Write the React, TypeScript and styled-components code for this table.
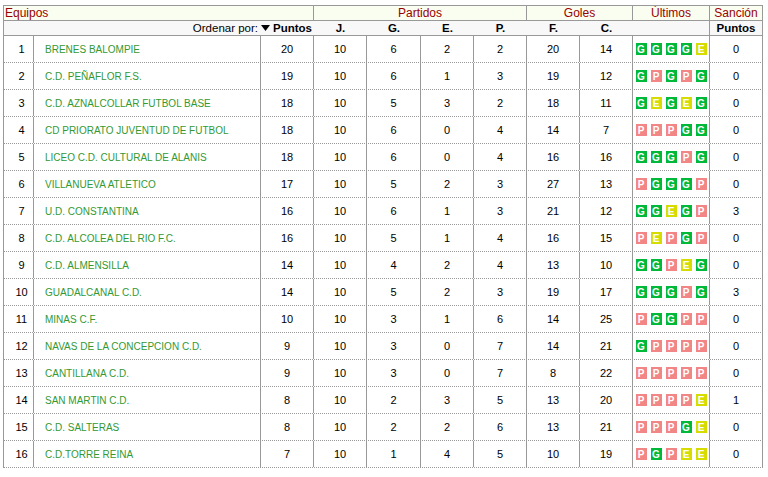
import React from "react";
import styled, { createGlobalStyle } from "styled-components";

const GlobalStyle = createGlobalStyle`
  html, body { margin: 0; padding: 0; background: #ffffff; }
  body { font-family: "Liberation Sans", Arial, sans-serif; }
`;

const COLS = "30px 227px 53px 53px 54px 53px 53px 53px 53px 77px 53px";
const LINE = "#999999";

const Table = styled.div`
  margin: 5px 0 0 3px;
  width: 760px;
  box-sizing: border-box;
  border-top: 1px solid ${LINE};
  border-left: 1px solid ${LINE};
  font-family: "Liberation Sans", Arial, sans-serif;
`;

const Row = styled.div<{ $kind: "group" | "sub" | "data" }>`
  display: grid;
  grid-template-columns: ${COLS};
  box-sizing: border-box;
  height: ${(p) => (p.$kind === "data" ? 27 : 15)}px;
  background: ${(p) =>
    p.$kind === "group" ? "#f9fef0" : p.$kind === "sub" ? "#f8f8f8" : "#ffffff"};
  border-bottom: 1px ${(p) => (p.$kind === "data" ? "dotted" : "solid")} ${LINE};
`;

const Cell = styled.div<{
  $span?: number;
  $align?: "left" | "center" | "right";
  $line?: boolean;
}>`
  grid-column: span ${(p) => p.$span ?? 1};
  box-sizing: border-box;
  display: flex;
  align-items: center;
  justify-content: ${(p) =>
    p.$align === "left" ? "flex-start" : p.$align === "right" ? "flex-end" : "center"};
  border-right: ${(p) => (p.$line === false ? "none" : `1px solid ${LINE}`)};
  white-space: nowrap;
  overflow: hidden;
`;

const GroupCell = styled(Cell)`
  color: #990000;
  font-size: 12px;
  padding-left: ${(p) => (p.$align === "left" ? "1px" : "0")};
`;

const SubCell = styled(Cell)`
  color: #000;
  font-size: 11.5px;
  font-weight: bold;
  padding-right: ${(p) => (p.$align === "right" ? "2px" : "0")};
`;

const SortLabel = styled.span`
  font-weight: normal;
  margin-right: 3px;
`;

const SortArrow = styled.svg`
  width: 9px;
  height: 6px;
  margin-right: 3px;
`;

const RankCell = styled(Cell)`
  font-size: 11px;
  color: #000;
  padding-left: 6px;
`;

const TeamCell = styled(Cell)`
  font-size: 10px;
  color: #339933;
  padding-left: 11px;
`;

const NumCell = styled(Cell)`
  font-size: 11px;
  color: #000;
`;

const FormCell = styled(Cell)`
  gap: 4px;
`;

const Badge = styled.span<{ $r: "G" | "P" | "E" }>`
  width: 11px;
  height: 12px;
  display: flex;
  align-items: center;
  justify-content: center;
  font-size: 10px;
  font-weight: bold;
  color: #ffffff;
  background: ${(p) =>
    p.$r === "G" ? "#00b83a" : p.$r === "P" ? "#f28585" : "#d7dc00"};
`;

type Team = {
  name: string;
  pts: number;
  j: number;
  g: number;
  e: number;
  p: number;
  f: number;
  c: number;
  form: string;
  san: number;
};

const teams: Team[] = [
  { name: "BRENES BALOMPIE", pts: 20, j: 10, g: 6, e: 2, p: 2, f: 20, c: 14, form: "GGGGE", san: 0 },
  { name: "C.D. PEÑAFLOR F.S.", pts: 19, j: 10, g: 6, e: 1, p: 3, f: 19, c: 12, form: "GPGPG", san: 0 },
  { name: "C.D. AZNALCOLLAR FUTBOL BASE", pts: 18, j: 10, g: 5, e: 3, p: 2, f: 18, c: 11, form: "GEGEG", san: 0 },
  { name: "CD PRIORATO JUVENTUD DE FUTBOL", pts: 18, j: 10, g: 6, e: 0, p: 4, f: 14, c: 7, form: "PPPGG", san: 0 },
  { name: "LICEO C.D. CULTURAL DE ALANIS", pts: 18, j: 10, g: 6, e: 0, p: 4, f: 16, c: 16, form: "GGGPG", san: 0 },
  { name: "VILLANUEVA ATLETICO", pts: 17, j: 10, g: 5, e: 2, p: 3, f: 27, c: 13, form: "PGGGP", san: 0 },
  { name: "U.D. CONSTANTINA", pts: 16, j: 10, g: 6, e: 1, p: 3, f: 21, c: 12, form: "GGEGP", san: 3 },
  { name: "C.D. ALCOLEA DEL RIO F.C.", pts: 16, j: 10, g: 5, e: 1, p: 4, f: 16, c: 15, form: "PEPGP", san: 0 },
  { name: "C.D. ALMENSILLA", pts: 14, j: 10, g: 4, e: 2, p: 4, f: 13, c: 10, form: "GGPEG", san: 0 },
  { name: "GUADALCANAL C.D.", pts: 14, j: 10, g: 5, e: 2, p: 3, f: 19, c: 17, form: "GGGPG", san: 3 },
  { name: "MINAS C.F.", pts: 10, j: 10, g: 3, e: 1, p: 6, f: 14, c: 25, form: "PGGPP", san: 0 },
  { name: "NAVAS DE LA CONCEPCION C.D.", pts: 9, j: 10, g: 3, e: 0, p: 7, f: 14, c: 21, form: "GPPPP", san: 0 },
  { name: "CANTILLANA C.D.", pts: 9, j: 10, g: 3, e: 0, p: 7, f: 8, c: 22, form: "PPPPP", san: 0 },
  { name: "SAN MARTIN C.D.", pts: 8, j: 10, g: 2, e: 3, p: 5, f: 13, c: 20, form: "PPPPE", san: 1 },
  { name: "C.D. SALTERAS", pts: 8, j: 10, g: 2, e: 2, p: 6, f: 13, c: 21, form: "PPPGE", san: 0 },
  { name: "C.D.TORRE REINA", pts: 7, j: 10, g: 1, e: 4, p: 5, f: 10, c: 19, form: "PGPEE", san: 0 },
];

export default function App() {
  return (
    <>
      <GlobalStyle />
      <Table>
        <Row $kind="group">
          <GroupCell $span={3} $align="left">Equipos</GroupCell>
          <GroupCell $span={4}>Partidos</GroupCell>
          <GroupCell $span={2}>Goles</GroupCell>
          <GroupCell>Últimos</GroupCell>
          <GroupCell>Sanción</GroupCell>
        </Row>
        <Row $kind="sub">
          <SubCell $span={3} $align="right" $line={false}>
            <SortLabel>Ordenar por:</SortLabel>
            <SortArrow viewBox="0 0 9 6">
              <path d="M0 0 H9 L4.5 6 Z" fill="#000" />
            </SortArrow>
            Puntos
          </SubCell>
          <SubCell $line={false}>J.</SubCell>
          <SubCell $line={false}>G.</SubCell>
          <SubCell $line={false}>E.</SubCell>
          <SubCell $line={false}>P.</SubCell>
          <SubCell $line={false}>F.</SubCell>
          <SubCell $line={false}>C.</SubCell>
          <SubCell />
          <SubCell>Puntos</SubCell>
        </Row>
        {teams.map((t, i) => (
          <Row $kind="data" key={t.name}>
            <RankCell>{i + 1}</RankCell>
            <TeamCell $align="left">{t.name}</TeamCell>
            <NumCell>{t.pts}</NumCell>
            <NumCell>{t.j}</NumCell>
            <NumCell>{t.g}</NumCell>
            <NumCell>{t.e}</NumCell>
            <NumCell>{t.p}</NumCell>
            <NumCell>{t.f}</NumCell>
            <NumCell>{t.c}</NumCell>
            <FormCell>
              {t.form.split("").map((r, k) => (
                <Badge key={k} $r={r as "G" | "P" | "E"}>
                  {r}
                </Badge>
              ))}
            </FormCell>
            <NumCell>{t.san}</NumCell>
          </Row>
        ))}
      </Table>
    </>
  );
}
